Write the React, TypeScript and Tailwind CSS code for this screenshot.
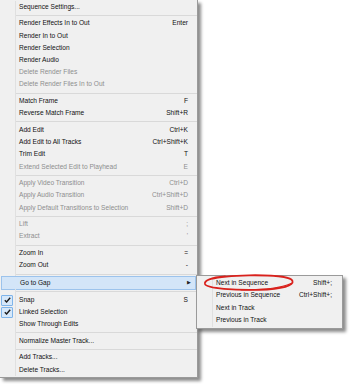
import React from "react";

type Item =
  | { sep: true }
  | { label: string; key?: string; off?: boolean; check?: boolean; hot?: boolean; sub?: boolean };

const items: Item[] = [
  { label: "Sequence Settings..." },
  { sep: true },
  { label: "Render Effects In to Out", key: "Enter" },
  { label: "Render In to Out" },
  { label: "Render Selection" },
  { label: "Render Audio" },
  { label: "Delete Render Files", off: true },
  { label: "Delete Render Files In to Out", off: true },
  { sep: true },
  { label: "Match Frame", key: "F" },
  { label: "Reverse Match Frame", key: "Shift+R" },
  { sep: true },
  { label: "Add Edit", key: "Ctrl+K" },
  { label: "Add Edit to All Tracks", key: "Ctrl+Shift+K" },
  { label: "Trim Edit", key: "T" },
  { label: "Extend Selected Edit to Playhead", key: "E", off: true },
  { sep: true },
  { label: "Apply Video Transition", key: "Ctrl+D", off: true },
  { label: "Apply Audio Transition", key: "Ctrl+Shift+D", off: true },
  { label: "Apply Default Transitions to Selection", key: "Shift+D", off: true },
  { sep: true },
  { label: "Lift", key: ";", off: true },
  { label: "Extract", key: "'", off: true },
  { sep: true },
  { label: "Zoom In", key: "=" },
  { label: "Zoom Out", key: "-" },
  { sep: true },
  { label: "Go to Gap", hot: true, sub: true },
  { sep: true },
  { label: "Snap", key: "S", check: true },
  { label: "Linked Selection", check: true },
  { label: "Show Through Edits" },
  { sep: true },
  { label: "Normalize Master Track..." },
  { sep: true },
  { label: "Add Tracks..." },
  { label: "Delete Tracks..." },
];

const subItems = [
  { label: "Next in Sequence", key: "Shift+;" },
  { label: "Previous in Sequence", key: "Ctrl+Shift+;" },
  { label: "Next in Track" },
  { label: "Previous in Track" },
];

function Check() {
  return (
    <div className="w-[12px] h-[11px] ml-[1px] bg-[#d6e8fa] border border-[#7eb4ea] rounded-[1px] flex items-center justify-center">
      <svg width="7" height="6" viewBox="0 0 7 6">
        <path d="M0.8 3.2 L2.6 5 L6.2 0.8" fill="none" stroke="#1b1b1b" strokeWidth="1.4" />
      </svg>
    </div>
  );
}

function Row({ item }: { item: Exclude<Item, { sep: true }> }) {
  const text = item.off ? "text-[#8e8e8e]" : "text-[#111]";
  if (item.hot) {
    return (
      <div className="h-[12.2px] flex items-center bg-[#d3e5f8] border border-[#9cc3ec] mx-[1px] -my-[0.5px] box-content">
        <div className="w-[15px] h-full" />
        <span className={`pl-[3px] ${text}`}>{item.label}</span>
        <span className="ml-auto pr-[4px] text-[5px] text-[#222]">▶</span>
      </div>
    );
  }
  return (
    <div className="h-[12.2px] flex items-center">
      <div className="w-[16px] h-full border-r border-[#e0e0e0] flex items-center">
        {item.check && <Check />}
      </div>
      <span className={`pl-[3px] ${text}`}>{item.label}</span>
      {item.key && <span className={`ml-auto pr-[9px] ${text}`}>{item.key}</span>}
    </div>
  );
}

function Sep() {
  return (
    <div className="h-[4.5px] flex">
      <div className="w-[16px] h-full border-r border-[#e0e0e0]" />
      <div className="flex-1 flex items-center">
        <div className="w-full h-[1px] bg-[#d9d9d9]" />
      </div>
    </div>
  );
}

export default function App() {
  return (
    <div className="w-[352px] h-[384px] bg-white relative overflow-hidden text-[6.6px] leading-none font-['Segoe_UI','Liberation_Sans',sans-serif]">

      {/* main menu */}
      <div className="w-[198px] pt-[1px] pb-[1px] bg-[#f0f0f0] border-r border-b border-[#9a9a9a] shadow-[3px_3px_3px_rgba(0,0,0,0.45)]">
        {items.map((it, i) =>
          "sep" in it ? <Sep key={i} /> : <Row key={i} item={it} />
        )}
      </div>

      {/* submenu */}
      <div className="absolute left-[196px] top-[275px] w-[147px] py-[1px] bg-[#f0f0f0] border border-[#9a9a9a] shadow-[3px_3px_3px_rgba(0,0,0,0.45)]">
        {subItems.map((s) => (
          <div key={s.label} className="h-[12.4px] flex items-center">
            <div className="w-[16px] h-full border-r border-[#e0e0e0]" />
            <span className="pl-[3px] text-[#111]">{s.label}</span>
            {s.key && <span className="ml-auto pr-[10px] text-[#111]">{s.key}</span>}
          </div>
        ))}
      </div>

      {/* red highlight ellipse */}
      <svg className="absolute left-[201px] top-[273px]" width="98" height="20" viewBox="0 0 98 20">
        <path
          d="M24 3.5 C10 4.5 3 7.5 4 11 C5.5 15.5 35 17.5 58 16.8 C82 16 93 12.5 91.5 8 C90 3.5 70 2 48 2.3 C32 2.6 18 3.8 10 6"
          fill="none"
          stroke="#d9211c"
          strokeWidth="1.8"
          strokeLinecap="round"
        />
        <path d="M40 16.8 C60 17 80 15 90 10.5" fill="none" stroke="#d9211c" strokeWidth="1.2" strokeLinecap="round" />
      </svg>
    </div>
  );
}
